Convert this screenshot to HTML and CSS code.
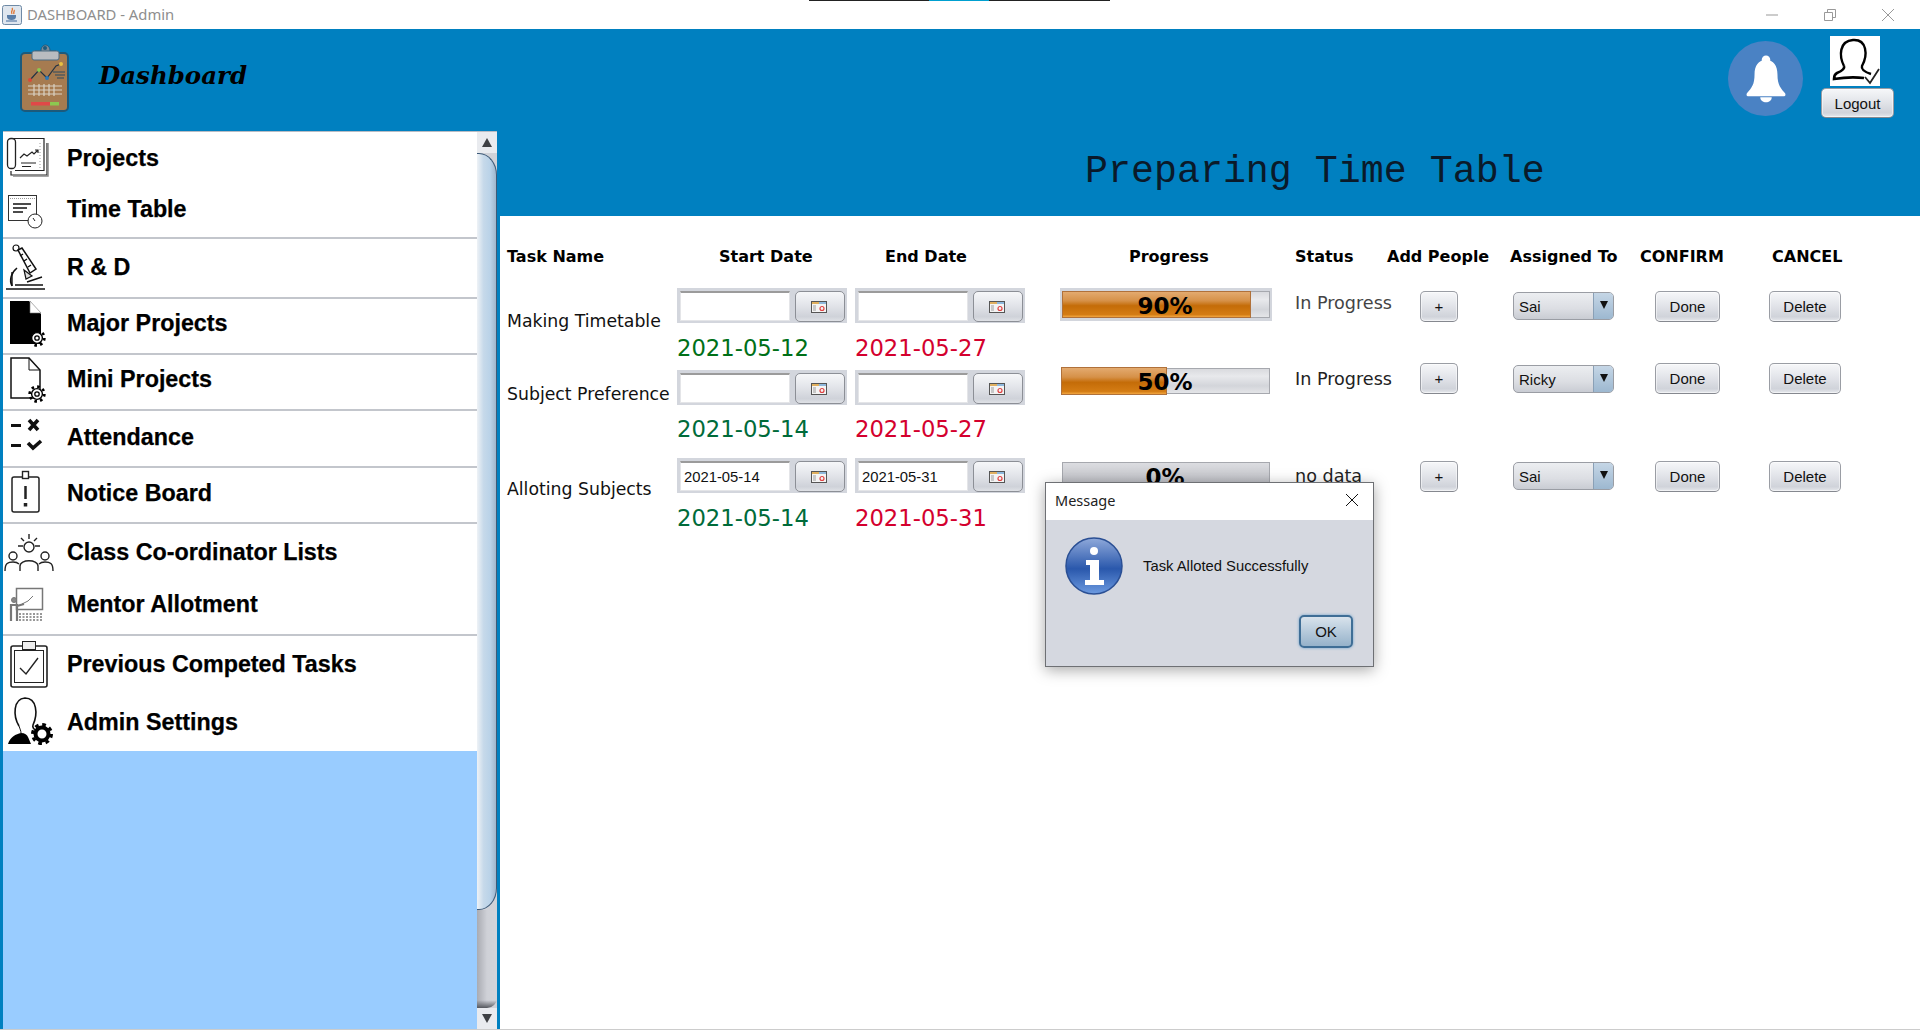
FILE: index.html
```html
<!DOCTYPE html>
<html lang="en">
<head>
<meta charset="utf-8">
<title>DASHBOARD - Admin</title>
<link rel="stylesheet" href="styles.css">
</head>
<body>
<svg class="defs" width="0" height="0" aria-hidden="true">
  <defs>
    <symbol id="cal" viewBox="0 0 16 12">
      <rect x="0.5" y="0.5" width="15" height="11" fill="#f4f4f4" stroke="#555"/>
      <rect x="1" y="1" width="7" height="2" fill="#e0b060"/>
      <rect x="8" y="1" width="7" height="2" fill="#8fb8dc"/>
      <rect x="2" y="4" width="3" height="6" fill="#c8c8c8"/>
      <circle cx="11" cy="7.5" r="2" fill="none" stroke="#e04040" stroke-width="1.2"/>
    </symbol>
    <symbol id="gear" viewBox="-10 -10 20 20">
      <circle r="7.4" fill="none" stroke="#000" stroke-width="2.6" stroke-dasharray="2.6 3.2"/>
      <circle r="5.4" fill="#fff" stroke="#000" stroke-width="1.4"/>
      <circle r="2.2" fill="none" stroke="#000" stroke-width="1.3"/>
    </symbol>
    <linearGradient id="infoGrad" x1="0" y1="0" x2="0" y2="1">
      <stop offset="0" stop-color="#8fa9da"/>
      <stop offset="0.55" stop-color="#2a58ac"/>
      <stop offset="1" stop-color="#6c9ae0"/>
    </linearGradient>
  </defs>
</svg>

<div class="window">
  <div class="titlebar">
    <svg class="java" viewBox="0 0 20 20">
      <rect x="0.5" y="0.5" width="19" height="19" rx="2" fill="#dfe6ee" stroke="#6f8aa6"/>
      <path d="M10 3c2 2-2 3 0 6M12 5c1 1-1 2 0 4" fill="none" stroke="#e0702a" stroke-width="1.3"/>
      <path d="M5 10h9v2c0 2-2 3-4.500 3S5 14 5 12z" fill="#5a7ea8"/>
      <path d="M4 16h11" stroke="#5a7ea8" stroke-width="1.2"/>
    </svg>
    <span class="wintitle">DASHBOARD - Admin</span>
    <div class="capture"><span class="capture-a"></span><span class="capture-b"></span><span class="capture-c"></span></div>
    <div class="controls">
      <svg class="ctl" viewBox="0 0 12 12"><path d="M0 6h12" stroke="#999" fill="none"/></svg>
      <svg class="ctl" viewBox="0 0 12 12"><path d="M.5 3.500h8v8h-8zM3.500 3.500v-3h8v8h-3" stroke="#999" fill="none"/></svg>
      <svg class="ctl" viewBox="0 0 12 12"><path d="M0 0l12 12M12 0L0 12" stroke="#999" fill="none"/></svg>
    </div>
  </div>

  <header class="topbar">
    <svg class="logo" viewBox="0 0 50 68">
      <rect x="1" y="9" width="47" height="58" rx="4" fill="#a67b50" stroke="#1c5a7c" stroke-width="2"/>
      <path d="M15 9V7h6c0-8 9-8 9 0h6v2" fill="#7d8c98" stroke="#1c5a7c"/>
      <rect x="12" y="7" width="27" height="9" rx="2" fill="#b9bcc0" stroke="#4b6a80"/>
      <circle cx="25" cy="4" r="2" fill="#1c5a7c"/>
      <path d="M10 36l9-10 8 8 9-12 5-2" fill="none" stroke="#234" stroke-width="1.2"/>
      <circle cx="10" cy="36" r="2" fill="#d94a3a"/><circle cx="19" cy="26" r="2" fill="#8cc850"/>
      <circle cx="27" cy="34" r="2" fill="#2a78b8"/><circle cx="41" cy="20" r="2" fill="#e8c040"/>
      <path d="M33 28h12M35 31h10M37 34h7" stroke="#2b4a60" stroke-width="1"/>
      <path d="M8 42h34M8 46h34M8 50h34M14 40v12M19 40v12M24 40v12M29 40v12M34 40v12" stroke="#d9d2c4" stroke-width="1.200"/>
      <rect x="11" y="58" width="19" height="3.500" fill="#e04848"/>
      <rect x="30" y="58" width="9" height="3.500" fill="#8cc850"/>
    </svg>
    <h1 class="brand">Dashboard</h1>
    <div class="bell">
      <svg class="bell-svg" viewBox="0 0 44 50">
        <circle cx="22" cy="5" r="4.500" fill="#fff"/>
        <path d="M22 5c-8 0-12 6-12 15 0 11-3 14-8 20-1 2 0 3 2 3h36c2 0 3-1 2-3-5-6-8-9-8-20 0-9-4-15-12-15z" fill="#fff"/>
        <path d="M16 44c0 7 12 7 12 0z" fill="#fff"/>
      </svg>
    </div>
    <div class="user">
      <svg class="avatar" viewBox="0 0 50 50">
        <rect width="50" height="50" fill="#fff"/>
        <path d="M14 30c-5-10-5-25 9-26s15 15 9 26c-1 3 3 6 9 8" fill="none" stroke="#000" stroke-width="2.400"/>
        <path d="M14 30c1 3-2 5-7 7-2 1-3 4-3 6 12-2 22-2 30-1" fill="none" stroke="#000" stroke-width="2.600"/>
        <path d="M35 41l5 6 9-14" fill="none" stroke="#222" stroke-width="1.800"/>
      </svg>
      <button class="btn logout">Logout</button>
    </div>
  </header>

  <div class="main">
    <aside class="panel">
      <nav class="list">
        <div class="menu">
          <a class="item">
            <svg class="ico" viewBox="0 0 64 56"><g fill="none" stroke="#222">
              <rect x="4.500" y="8.500" width="8" height="30" rx="3.500" stroke-width="1.300"/><path d="M8 8.500h33v32H12M44 13v32H8v-4" stroke-width="1.200"/><path d="M45 13v33H10" stroke="#888" stroke-width="1.500"/>
              <path d="M37 13v26" stroke="#999" stroke-dasharray="1 2"/><path d="M17 28l4-4 3 2 5-4 2 2 4-4M32 20h3v3" stroke-width="1.200"/><path d="M18 33h15M19 36.500h9" stroke-width="1.100"/></g></svg>
            <span class="label">Projects</span>
          </a>
          <a class="item sep pb3">
            <svg class="ico" viewBox="0 0 64 56"><g fill="none" stroke="#333">
              <rect x="5.500" y="14.500" width="28" height="25"/><path d="M7 17.500h25" stroke="#999" stroke-dasharray="1 1"/>
              <path d="M10 23h18M10 27h14M10 31h10" stroke="#111" stroke-width="1.300"/>
              <circle cx="32" cy="40" r="7" fill="#fff" stroke="#222"/><path d="M32 40l-2-3" stroke="#222"/></g></svg>
            <span class="label">Time Table</span>
          </a>
          <a class="item sep pb2">
            <svg class="ico" viewBox="0 0 64 56"><g fill="none" stroke="#111" stroke-width="1.200">
              <circle cx="13" cy="9" r="3"/><path d="M15 11l4-2 14 21-6 4zM20 15l-3 2M24 20l-3 2M28 26l-3 2" stroke-width="1.500"/>
              <path d="M21 31l8 6-6 3z" fill="#ddd"/><path d="M14 29c-6 5-8 12-5 18" stroke-width="1.500"/>
              <path d="M9 47V33M12 46h28M24 43l15-5M3 50h39" stroke-width="1.400"/></g></svg>
            <span class="label">R &amp; D</span>
          </a>
          <a class="item sep pb6">
            <svg class="ico" viewBox="0 0 64 56">
              <path d="M7 6h19l12 13v30H7z" fill="#000"/><path d="M27 6l11 12H27z" fill="#fff" stroke="#777" stroke-width=".6"/>
              <use href="#gear" x="24" y="33" width="20" height="20"/></svg>
            <span class="label">Major Projects</span>
          </a>
          <a class="item sep pb6">
            <svg class="ico" viewBox="0 0 64 56">
              <path d="M8 7h18l11 12v28H8z" fill="#fff" stroke="#111" stroke-width="1.500"/><path d="M26 7v12h11" fill="none" stroke="#111"/>
              <use href="#gear" x="24" y="33" width="20" height="20"/></svg>
            <span class="label">Mini Projects</span>
          </a>
          <a class="item sep pb3">
            <svg class="ico" viewBox="0 0 64 56"><g fill="none" stroke="#111">
              <path d="M8 16.500h10M8 36.500h10" stroke-width="3"/><path d="M26 11l9 10M35 11l-9 10" stroke-width="3.600"/><path d="M25 34l5 5 8-7" stroke-width="3.600"/></g></svg>
            <span class="label">Attendance</span>
          </a>
          <a class="item sep pb4">
            <svg class="ico" viewBox="0 0 64 56"><g fill="none" stroke="#222">
              <rect x="9" y="12" width="27" height="35" rx="2" stroke-width="1.500"/><rect x="19.500" y="6.500" width="6" height="7" fill="#fff" stroke-width="1.400"/>
              <path d="M22.500 21v13" stroke-width="2.500"/><path d="M22.500 38v3.500" stroke-width="3.500"/></g></svg>
            <span class="label">Notice Board</span>
          </a>
          <a class="item">
            <svg class="ico" viewBox="0 0 64 56"><g fill="none" stroke="#222" stroke-width="1.400">
              <circle cx="26" cy="23" r="5"/><path d="M26 10v5M18 14l3 3M34 14l-3 3M15 22h5M32 22h5"/>
              <circle cx="10" cy="32" r="4"/><circle cx="42" cy="32" r="4"/>
              <path d="M17 47v-5c0-7 18-7 18 0v5M2 47c0-8 3-9 8-9 3 0 5 1 6 2M50 47c0-8-3-9-8-9-3 0-5 1-6 2"/></g></svg>
            <span class="label">Class Co-ordinator Lists</span>
          </a>
          <a class="item sep pb6">
            <svg class="ico" viewBox="0 0 64 56"><g fill="none" stroke="#777">
              <rect x="13.500" y="12.500" width="26" height="21" stroke-width="1.500"/><path d="M19 28l6-3 5-5" /><circle cx="11" cy="24" r="2.500" fill="#888"/>
              <path d="M8 45V29h6v16M14 30l7-2" stroke-width="2.200"/><path d="M16 38h23M16 41h23M16 44h23" stroke-dasharray="2 1.500" stroke-width="1.400"/></g></svg>
            <span class="label">Mentor Allotment</span>
          </a>
          <a class="item">
            <svg class="ico" viewBox="0 0 64 56"><g fill="none" stroke="#222">
              <rect x="8" y="10" width="36" height="41" rx="2" stroke-width="1.600"/><rect x="11.500" y="14.500" width="29" height="32"/>
              <rect x="19.500" y="5.500" width="13" height="8" fill="#eee"/><path d="M17 32l6 6 12-16" stroke-width="1.400"/></g></svg>
            <span class="label">Previous Competed Tasks</span>
          </a>
          <a class="item">
            <svg class="ico" viewBox="0 0 64 56">
              <path d="M16 32C10 22 10 5 22 4c12 0 13 16 8 27-1 3 2 5 4 6" fill="none" stroke="#111" stroke-width="1.600"/>
              <path d="M5 50c2-7 8-10 13-11 4 0 6 2 7 4l3 7z" fill="#000"/><path d="M16 32c1 3 2 5 2 7" stroke="#111" fill="none"/>
              <circle cx="39" cy="40" r="6.500" fill="none" stroke="#000" stroke-width="4"/>
              <circle cx="39" cy="40" r="9.500" fill="none" stroke="#000" stroke-width="3" stroke-dasharray="3.700 3.750"/></svg>
            <span class="label">Admin Settings</span>
          </a>
        </div>
      </nav>
      <div class="scrollbar">
        <div class="sb-btn"><span class="tri-up"></span></div>
        <div class="sb-thumb"></div>
        <div class="sb-track"></div>
        <div class="sb-btn"><span class="tri-down"></span></div>
      </div>
    </aside>

    <section class="pane">
      <h2 class="heading">Preparing Time Table</h2>
      <div class="sheet">
        <div class="col col-name">
          <div class="th">Task Name</div>
          <div class="name r1">Making Timetable</div>
          <div class="name r2">Subject Preference</div>
          <div class="name r3">Alloting Subjects</div>
        </div>

        <div class="col col-start">
          <div class="th">Start Date</div>
          <div class="picker p1"><span class="field"></span><span class="calbtn"><svg class="calicon"><use href="#cal"/></svg></span></div>
          <div class="date d1 green">2021-05-12</div>
          <div class="picker p2"><span class="field"></span><span class="calbtn"><svg class="calicon"><use href="#cal"/></svg></span></div>
          <div class="date green2">2021-05-14</div>
          <div class="picker p3"><span class="field">2021-05-14</span><span class="calbtn"><svg class="calicon"><use href="#cal"/></svg></span></div>
          <div class="date green2 d3">2021-05-14</div>
        </div>

        <div class="col col-end">
          <div class="th">End Date</div>
          <div class="picker p1"><span class="field"></span><span class="calbtn"><svg class="calicon"><use href="#cal"/></svg></span></div>
          <div class="date d1 red">2021-05-27</div>
          <div class="picker p2"><span class="field"></span><span class="calbtn"><svg class="calicon"><use href="#cal"/></svg></span></div>
          <div class="date red">2021-05-27</div>
          <div class="picker p3"><span class="field">2021-05-31</span><span class="calbtn"><svg class="calicon"><use href="#cal"/></svg></span></div>
          <div class="date red d3">2021-05-31</div>
        </div>

        <div class="col col-progress">
          <div class="th">Progress</div>
          <div class="bar bar-focus r1"><div class="track"><div class="fill" style="width:91.7%"></div><span class="pct">90%</span></div></div>
          <div class="bar bar-plain r2"><div class="track"><div class="fill fill-over" style="width:51.5%"></div><span class="pct">50%</span></div></div>
          <div class="bar bar-plain bar-empty r3"><div class="track"><span class="pct">0%</span></div></div>
        </div>

        <div class="col col-status">
          <div class="th">Status</div>
          <div class="status soft r1">In Progress</div>
          <div class="status r2">In Progress</div>
          <div class="status r3">no data</div>
        </div>

        <div class="col col-add">
          <div class="th">Add People</div>
          <button class="btn plus r1">+</button>
          <button class="btn plus r2">+</button>
          <button class="btn plus r3">+</button>
        </div>

        <div class="col col-assign">
          <div class="th">Assigned To</div>
          <div class="combo r1"><span class="combo-val">Sai</span><span class="combo-arrow"><span class="tri-down small"></span></span></div>
          <div class="combo r2"><span class="combo-val">Ricky</span><span class="combo-arrow"><span class="tri-down small"></span></span></div>
          <div class="combo r3"><span class="combo-val">Sai</span><span class="combo-arrow"><span class="tri-down small"></span></span></div>
        </div>

        <div class="col col-confirm">
          <div class="th">CONFIRM</div>
          <button class="btn done r1">Done</button>
          <button class="btn done r2">Done</button>
          <button class="btn done r3">Done</button>
        </div>

        <div class="col col-cancel">
          <div class="th">CANCEL</div>
          <button class="btn del r1">Delete</button>
          <button class="btn del r2">Delete</button>
          <button class="btn del r3">Delete</button>
        </div>
      </div>
    </section>
  </div>

  <div class="dialog">
    <div class="dlg-title">
      <span>Message</span>
      <svg class="dlg-x" viewBox="0 0 12 12"><path d="M0 0l12 12M12 0L0 12" stroke="#111" fill="none"/></svg>
    </div>
    <div class="dlg-body">
      <div class="dlg-msg">
        <svg class="info" viewBox="0 0 58 58">
          <circle cx="29" cy="29" r="28" fill="url(#infoGrad)" stroke="#2a4f94" stroke-width="1.500"/>
          <circle cx="29" cy="14" r="4" fill="#fff"/>
          <path d="M21 23h13v20h5v5H20v-5h5V28h-4z" fill="#fff"/>
        </svg>
        <span>Task Alloted Successfully</span>
      </div>
      <button class="btn ok">OK</button>
    </div>
  </div>
</div>
</body>
</html>
```

FILE: styles.css
```css
* { box-sizing: border-box; }
html, body { margin: 0; padding: 0; height: 100%; overflow: hidden; }
body { font-family: "Liberation Sans", Arial, sans-serif; background: #fff; }
.defs { position: absolute; }

.window { position: relative; width: 1920px; height: 1030px; display: flex; flex-direction: column; background: #0080c0; }

/* title bar */
.titlebar { position: relative; height: 29px; flex: none; background: #fff; display: flex; align-items: center; padding-left: 2px; }
.java { width: 20px; height: 20px; }
.wintitle { margin: 0 0 2px 5px; font: 14.800px "Noto Sans", sans-serif; color: #8e8e8e; }
.capture { position: absolute; left: 809px; top: 0; display: flex; height: 1px; }
.capture-a, .capture-c { background: #222; }
.capture-a { width: 120px; }
.capture-b { width: 60px; background: #00a0d0; }
.capture-c { width: 121px; }
.controls { margin-left: auto; display: flex; gap: 46px; padding-right: 26px; }
.ctl { width: 12px; height: 12px; }

/* header */
.topbar { height: 103px; flex: none; display: flex; align-items: flex-start; padding-left: 20px; }
.logo { width: 50px; height: 68px; margin-top: 15px; }
.brand { margin: 32px 0 0 29px; font: italic bold 24.500px "DejaVu Serif", serif; color: #000; line-height: 30px; }
.bell { margin: 12px 18px 0 auto; width: 75px; height: 75px; border-radius: 50%; background: #4a82c4; display: flex; align-items: center; justify-content: center; }
.bell-svg { width: 42px; height: 48px; }
.user { width: 99px; padding: 7px 26px 0 0; display: flex; flex-direction: column; }
.avatar { width: 50px; height: 50px; margin-left: 9px; display: block; }
.logout { width: 73px; height: 30px; margin-top: 2px; }

/* buttons */
.btn { display: block; padding: 0; font: 15px "Liberation Sans", sans-serif; color: #111; background: linear-gradient(#f6f7f9, #e3e5ea 45%, #d0d3da 85%, #e6e8ec); border: 1px solid #9a9da4; border-bottom-color: #85888f; border-radius: 5px; box-shadow: inset 0 0 0 1px rgba(255,255,255,.5); }

/* main */
.main { flex: 1; display: flex; min-height: 0; padding-bottom: 1px; background: linear-gradient(#0080c0, #0080c0) top/100% calc(100% - 1px) no-repeat, #ccc; }
.panel { width: 494px; margin-left: 3px; display: flex; border-top: 1px solid #b8bcc4; margin-top: -1px; }
.list { width: 474px; background: #99ccff; }
.menu { background: #fff; display: grid; grid-template-rows: 52px 55px 60px 56px 56px 57px 56px 56px 56px 56px 59px; }
.item { display: flex; align-items: center; color: #000; min-width: 0; }
.sep { border-bottom: 2px solid #c3c6cc; }
.pb2 { padding-bottom: 2px; }
.pb3 { padding-bottom: 3px; }
.pb4 { padding-bottom: 4px; }
.pb6 { padding-bottom: 6px; }
.ico { width: 64px; height: 56px; flex: none; overflow: visible; }
.label { font: bold 23.300px "Liberation Sans", sans-serif; line-height: 28px; white-space: nowrap; -webkit-text-stroke: .25px #000; }

/* scrollbar */
.scrollbar { width: 20px; display: flex; flex-direction: column; background: #d0d2d8; }
.sb-btn { height: 21px; flex: none; display: flex; align-items: center; justify-content: center; background: #e9ebef; }
.sb-thumb { height: 757px; flex: none; background: linear-gradient(90deg, #eef2f6, #c6d9ea 35%, #b9d2e8 70%, #9fb6cc); border: 1px solid #3d5a78; border-left: 0; border-radius: 0 18px 18px 0 / 0 22px 22px 0; }
.sb-track { flex: 1; background: linear-gradient(#0000 92%, #55585e), linear-gradient(90deg, #a9abb2, #cfd1d7 50%, #d2d4da); border-radius: 0 0 10px 0; }
.tri-up { width: 0; height: 0; border-left: 5px solid transparent; border-right: 5px solid transparent; border-bottom: 9px solid #3e4044; }
.tri-down { width: 0; height: 0; border-left: 5px solid transparent; border-right: 5px solid transparent; border-top: 9px solid #3e4044; }
.tri-down.small { border-left-width: 4px; border-right-width: 4px; border-top-width: 8px; border-top-color: #111; }

/* right pane */
.pane { width: 1420px; margin-left: 3px; display: flex; flex-direction: column; }
.heading { height: 84px; flex: none; margin: 0; padding: 13px 0 0 585px; font: normal 38.300px/54px "Liberation Mono", monospace; color: #0a1a2a; white-space: nowrap; }
.sheet { flex: 1; background: #fff; display: flex; padding-top: 29px; }
.col { flex: none; display: flex; flex-direction: column; align-items: flex-start; }
.col-name { width: 177px; padding-left: 7px; }
.col-start { width: 178px; }
.col-end { width: 205px; }
.col-progress { width: 235px; }
.col-status { width: 92px; }
.col-add { width: 123px; }
.col-assign { width: 130px; }
.col-confirm { width: 129px; }
.col-cancel { width: 100px; }

.th { height: 24px; font: bold 16px/24px "DejaVu Sans", sans-serif; color: #000; white-space: nowrap; }
.col-start .th { margin-left: 42px; }
.col-end .th { margin-left: 30px; }
.col-progress .th { margin-left: 69px; }
.col-cancel .th { margin-left: 3px; }

.name { height: 24px; font: 17.300px/24px "DejaVu Sans", sans-serif; color: #111; white-space: nowrap; }
.col-name .r1 { margin-top: 40px; }
.col-name .r2 { margin-top: 49px; }
.col-name .r3 { margin-top: 71px; }

.picker { width: 170px; height: 35px; background: #d3d6dd; padding: 3px 2px 2px 3px; display: flex; justify-content: space-between; }
.p1 { margin-top: 19px; }
.p2 { margin-top: 7px; }
.p3 { margin-top: 14px; }
.field { width: 110px; height: 30px; background: #fff; border: 1px solid #e4e5e8; border-top: 2px solid #9b9b9b; font: 14.800px/28px "Liberation Sans", sans-serif; padding-left: 3px; color: #111; }
.calbtn { width: 50px; height: 31px; border: 1px solid #8c8f96; border-radius: 5px; background: linear-gradient(#f6f7f9, #e3e5ea 45%, #cfd2d9 85%, #dfe1e6); display: flex; align-items: center; justify-content: center; }
.calicon { width: 16px; height: 12px; margin-right: 2px; }
.date { height: 30px; margin-top: 9px; font: 22.700px/30px "DejaVu Sans", sans-serif; white-space: nowrap; }
.date.d1 { margin-top: 10px; }
.date.d3 { margin-top: 10px; }
.green { color: #007018; }
.green2 { color: #006b3a; }
.red { color: #d4002e; }

.bar { width: 212px; }
.bar-focus { height: 33px; margin-top: 19px; background: #d3d6dd; padding: 3px 2px; }
.bar-plain { height: 28px; padding: 1px 2px; }
.bar.r2 { margin-top: 46px; }
.bar.r3 { margin-top: 66px; height: 30px; }
.track { position: relative; height: 100%; background: linear-gradient(#d9dade, #e8e9ec 30%, #d3d5da 70%, #e4e5e8); border: 1px solid #a6a8ae; display: flex; justify-content: center; align-items: center; }
.bar-empty .track { background: linear-gradient(#dcdde1, #b6b7bd); }
.fill { position: absolute; left: -1px; top: -1px; bottom: -1px; background: linear-gradient(#e3aa6f, #d69148 35%, #c46c08 55%, #d47c14 90%, #f2a640); border: 1px solid #b0713a; }
.fill-over { top: -2px; bottom: -2px; left: -2px; }
.pct { position: relative; top: 1px; font: bold 23px/26px "DejaVu Sans", sans-serif; color: #000; margin-right: 2px; }

.status { height: 24px; font: 17.600px/24px "DejaVu Sans", sans-serif; color: #222; white-space: nowrap; }
.status.soft { color: #444; }
.col-status .r1 { margin-top: 22px; }
.col-status .r2 { margin-top: 52px; }
.col-status .r3 { margin-top: 73px; }

.plus, .done, .del { height: 31px; }
.btn.r1 { margin-top: 22px; }
.btn.r2 { margin-top: 41px; }
.btn.r3 { margin-top: 67px; }
.plus { width: 38px; margin-left: 33px; }
.done { width: 65px; margin-left: 15px; }
.del { width: 72px; }

.combo { width: 101px; height: 28px; margin-left: 3px; border: 1px solid #9a9da4; border-radius: 5px; display: flex; background: linear-gradient(#eceef1, #dcdee3 60%, #c9ccd3); overflow: hidden; }
.combo.r1 { margin-top: 23px; }
.combo.r2 { margin-top: 45px; }
.combo.r3 { margin-top: 69px; }
.combo-val { flex: 1; padding-left: 5px; font: 15px/27px "Liberation Sans", sans-serif; color: #111; }
.combo-arrow { width: 20px; display: flex; justify-content: center; padding-top: 8px; background: linear-gradient(#c5d6e6, #9db8d0); border-left: 1px solid #8aa0b6; }

/* dialog */
.dialog { position: absolute; left: 1045px; top: 482px; width: 329px; height: 185px; border: 1px solid #6e7074; display: flex; flex-direction: column; box-shadow: 0 3px 14px rgba(0,0,0,.35); }
.dlg-title { height: 37px; flex: none; background: #fff; display: flex; align-items: center; justify-content: space-between; padding: 0 15px 4px 9px; font: 14.500px "Noto Sans", sans-serif; color: #222; }
.dlg-x { width: 12px; height: 12px; }
.dlg-body { flex: 1; background: #d5d8e0; display: flex; flex-direction: column; padding: 0 20px 0 19px; }
.dlg-msg { display: flex; align-items: center; gap: 20px; margin-top: 17px; font: 14.800px "Liberation Sans", sans-serif; color: #111; }
.info { width: 58px; height: 58px; flex: none; }
.ok { width: 54px; height: 33px; margin: 20px 0 0 auto; background: linear-gradient(#d9e3ec, #b6cadb 50%, #96b2ca); border: 2px solid #3f6e96; box-shadow: 0 0 3px #6aa0cc; }
```
